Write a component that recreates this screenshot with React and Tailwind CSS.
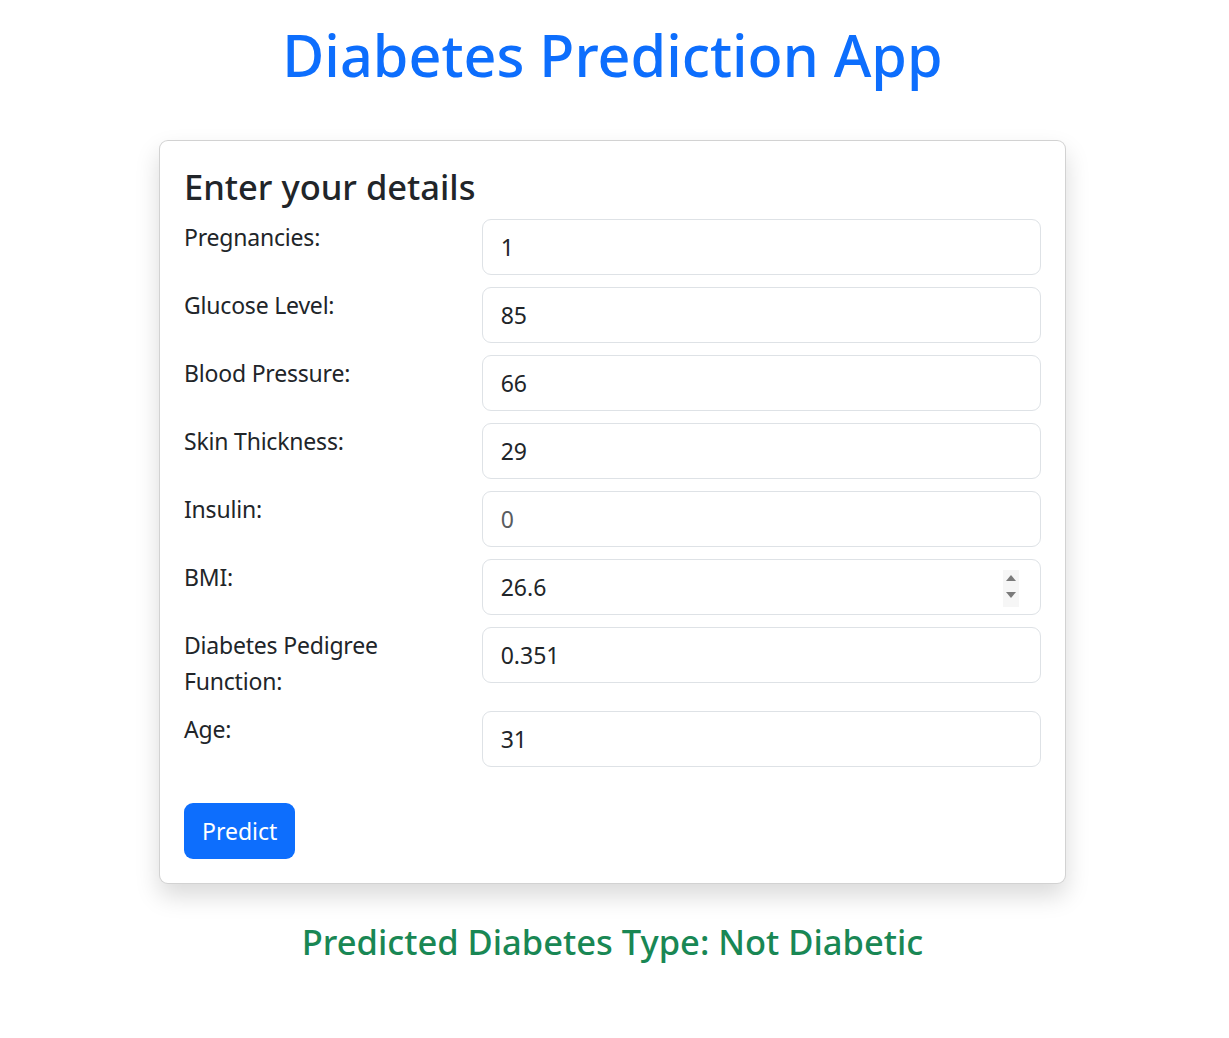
import { useState } from 'react';

const fields = [
  { id: 'pregnancies', label: 'Pregnancies:', value: '1' },
  { id: 'glucose', label: 'Glucose Level:', value: '85' },
  { id: 'bp', label: 'Blood Pressure:', value: '66' },
  { id: 'skin', label: 'Skin Thickness:', value: '29' },
  { id: 'insulin', label: 'Insulin:', value: '', placeholder: '0' },
  { id: 'bmi', label: 'BMI:', value: '26.6', spinner: true },
  { id: 'dpf', label: 'Diabetes Pedigree Function:', value: '0.351' },
  { id: 'age', label: 'Age:', value: '31' },
];

// number input spin buttons (shown on the hovered field)
function Spinner() {
  return (
    <div className="absolute right-[22px] top-[11px] flex h-[37px] w-[16px] flex-col items-center gap-[11px] bg-[#f6f6f6] pt-[5px]">
      <svg width="10" height="6" viewBox="0 0 10 6">
        <path d="M5 0 L10 6 L0 6 Z" fill="#7b7b7b" />
      </svg>
      <svg width="10" height="6" viewBox="0 0 10 6">
        <path d="M0 0 L10 0 L5 6 Z" fill="#7b7b7b" />
      </svg>
    </div>
  );
}

export default function App() {
  const [values, setValues] = useState(
    Object.fromEntries(fields.map((f) => [f.id, f.value]))
  );

  return (
    <div className="flow-root min-h-screen bg-white pr-[4px] text-[#212529] font-['Noto_Sans',sans-serif] text-[23px] leading-[36px]">
      {/* Title */}
      <h1 className="mt-[19px] mb-[49px] text-center text-[57.5px] leading-[72px] font-medium text-[#0d6efd]">
        Diabetes Prediction App
      </h1>

      {/* Form card */}
      <div className="mx-auto w-[907px] rounded-[9px] border border-black/[0.175] bg-white p-[24px] shadow-[0_12px_24px_rgba(0,0,0,0.15)]">
        <h3 className="mb-[11px] text-[34.5px] leading-[43px] font-medium">Enter your details</h3>

        <form onSubmit={(e) => e.preventDefault()}>
          {fields.map((f) => (
            <div key={f.id} className="mb-[12px] grid grid-cols-[261.67px_1fr] gap-x-[36px]">
              <label htmlFor={f.id} className="block tracking-[-0.2px]">
                {f.label}
              </label>
              <div className="relative">
                <input
                  id={f.id}
                  type="text"
                  value={values[f.id]}
                  placeholder={f.placeholder}
                  onChange={(e) => setValues({ ...values, [f.id]: e.target.value })}
                  className="block h-[56px] w-full rounded-[9px] border border-[#dee2e6] bg-white px-[18px] py-[9px] text-[23px] leading-[36px] text-[#212529] placeholder:text-[#595c5f] focus:outline-none"
                />
                {f.spinner && <Spinner />}
              </div>
            </div>
          ))}

          <button
            type="submit"
            className="mt-[24px] h-[56px] rounded-[9px] bg-[#0d6efd] px-[18px] text-[23px] leading-[36px] text-white"
          >
            Predict
          </button>
        </form>
      </div>

      {/* Result */}
      <h4 className="mt-[36px] text-center text-[34.5px] leading-[43px] font-medium text-[#198754]">
        Predicted Diabetes Type: Not Diabetic
      </h4>
    </div>
  );
}
